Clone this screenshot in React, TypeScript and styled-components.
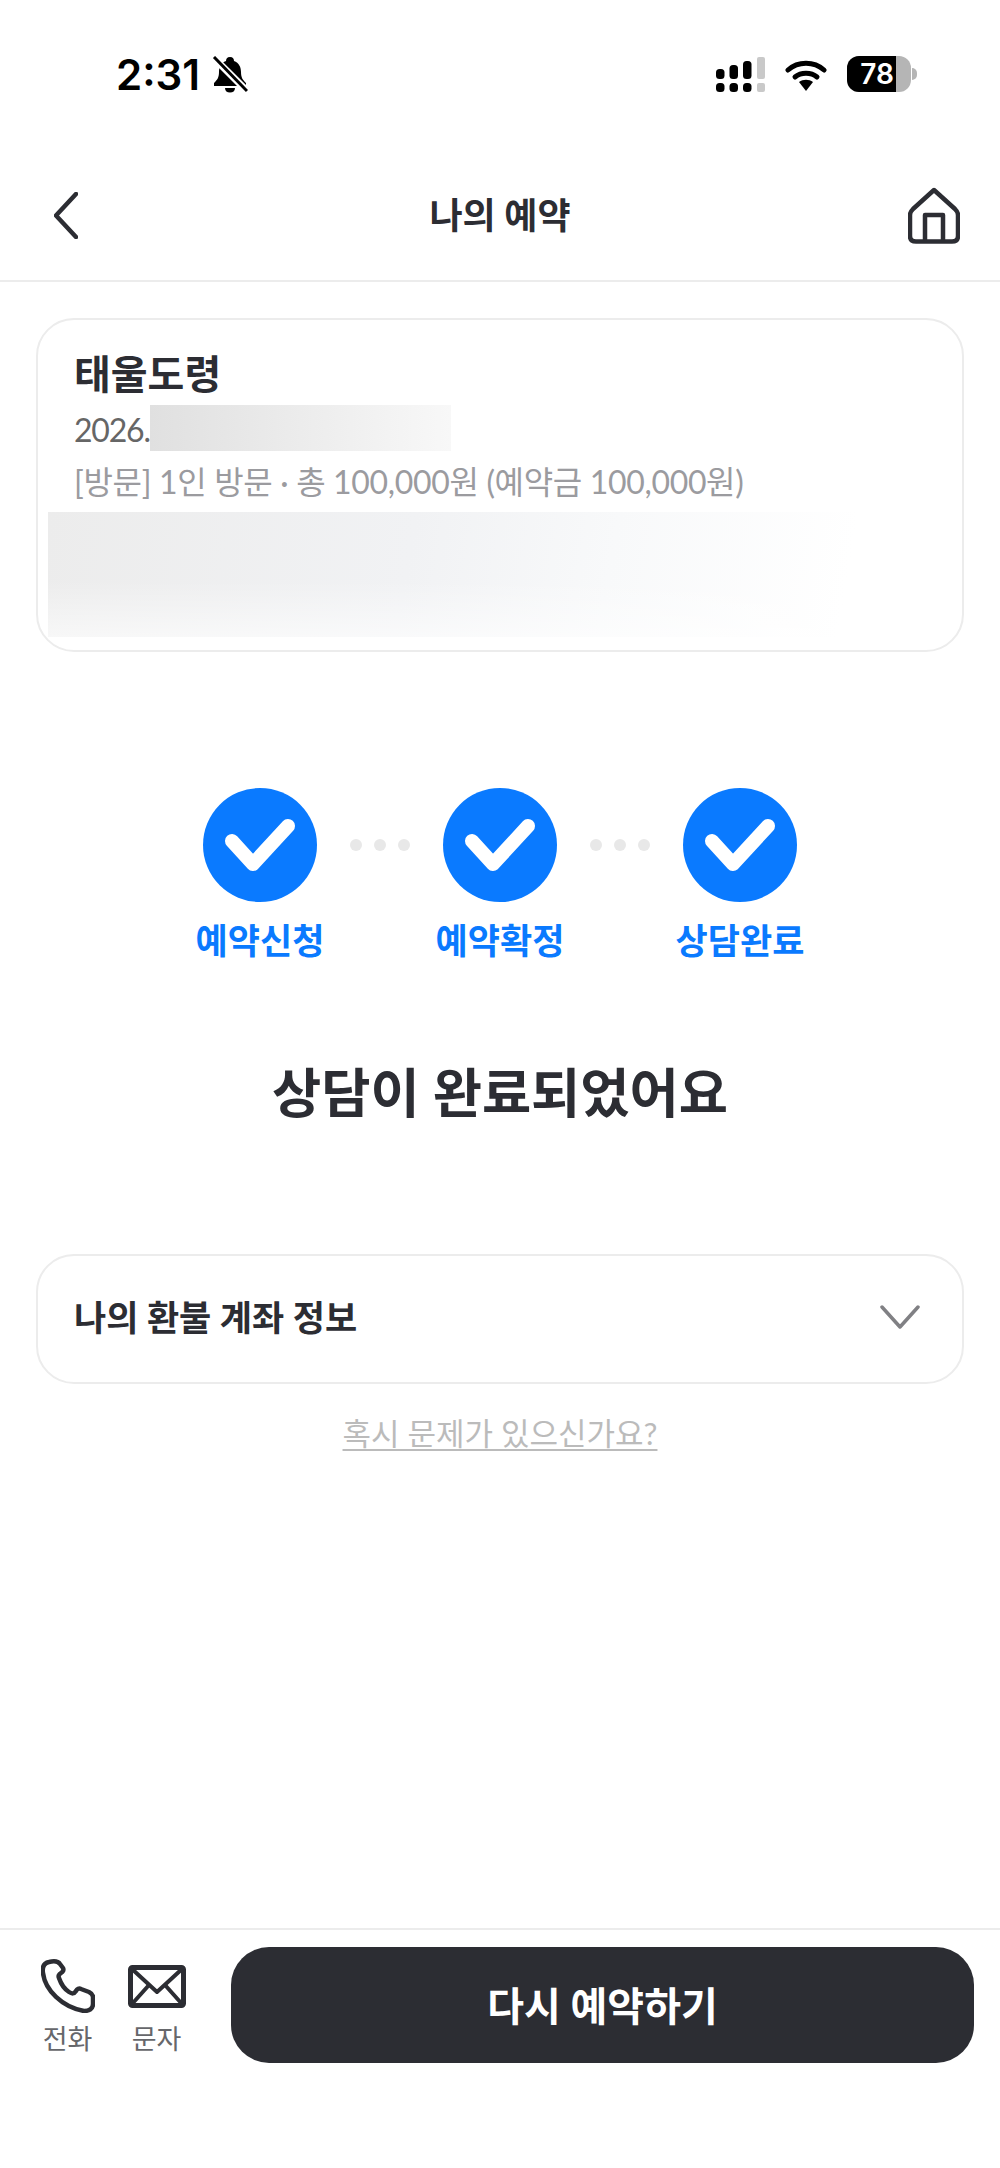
import React from 'react';
import styled, { createGlobalStyle } from 'styled-components';

const INK = '#2c2d33';
const BLUE = '#0a7aff';
const LINE = '#ececec';

const GlobalStyle = createGlobalStyle`
  html, body {
    margin: 0;
    padding: 0;
    background: #fff;
  }
  * {
    box-sizing: border-box;
  }
  body {
    font-family: Lato, "Noto Sans CJK KR", sans-serif;
    color: ${INK};
  }
`;

const Page = styled.div`
  width: 1000px;
  height: 2168px;
  display: flex;
  flex-direction: column;
  background: #fff;
  overflow: hidden;
`;

const StatusBar = styled.div`
  height: 150px;
  padding: 56px 83px 0 116px;
  display: flex;
  align-items: flex-start;
  justify-content: space-between;
`;

const StatusGroup = styled.div`
  display: flex;
  align-items: center;
`;

const Clock = styled.span`
  font-family: Inter, sans-serif;
  font-size: 42px;
  font-weight: 600;
  line-height: 36px;
  color: #000;
  width: 96px;
`;

const Battery = styled.div`
  position: relative;
  width: 64px;
  height: 36px;
  margin-left: 20px;
  border-radius: 12px;
  overflow: hidden;
  background: #b5b5b5;
  display: flex;
`;

const BatteryFill = styled.div`
  width: 49px;
  background: #000;
  color: #fff;
  font-family: Inter, sans-serif;
  font-size: 28px;
  font-weight: 600;
  line-height: 36px;
  text-align: right;
  padding-right: 2px;
`;

const BatteryTip = styled.div`
  width: 5px;
  height: 12px;
  border-radius: 0 6px 6px 0;
  background: #b5b5b5;
  margin-left: 1px;
`;

const Header = styled.header`
  height: 132px;
  padding: 0 40px;
  border-bottom: 2px solid ${LINE};
  display: grid;
  grid-template-columns: 1fr auto 1fr;
  align-items: center;
`;

const HomeLink = styled.div`
  justify-self: end;
  display: flex;
`;

const BackLink = styled.div`
  justify-self: start;
  margin-left: 14px;
  display: flex;
`;

const HeaderTitle = styled.h1`
  margin: 0;
  font-size: 36px;
  font-weight: 700;
  line-height: 44px;
  color: ${INK};
`;

const Main = styled.main`
  flex: 1;
  padding: 36px 36px 0;
  display: flex;
  flex-direction: column;
`;

const Card = styled.section`
  height: 334px;
  padding: 30px 36px 0;
  border: 2px solid ${LINE};
  border-radius: 38px;
  overflow: hidden;
`;

const ShopName = styled.div`
  font-size: 40px;
  font-weight: 700;
  line-height: 48px;
  color: ${INK};
`;

const DateRow = styled.div`
  display: flex;
  height: 46px;
  margin-top: 7px;
  font-size: 32px;
  line-height: 50px;
  letter-spacing: -1.2px;
  color: #666;
`;

const Redacted = styled.div`
  width: 301px;
  height: 46px;
  background: linear-gradient(90deg, #e0e0e0, #f8f8f8);
`;

const Detail = styled.div`
  margin-top: 8px;
  font-size: 32px;
  font-weight: 400;
  line-height: 46px;
  color: #9b9b9f;
  letter-spacing: -0.33px;
  white-space: nowrap;
`;

const BlurBlock = styled.div`
  width: 900px;
  height: 125px;
  margin: 7px 0 0 -26px;
  background:
    linear-gradient(180deg, rgba(255, 255, 255, 0) 55%, rgba(255, 255, 255, 0.6) 100%),
    linear-gradient(100deg, #ececec 0%, #f1f2f4 40%, #f8f9fa 62%, #fff 88%);
`;

const Stepper = styled.div`
  margin-top: 136px;
  display: flex;
  justify-content: center;
`;

const Step = styled.div`
  width: 114px;
  display: flex;
  flex-direction: column;
  align-items: center;
`;

const StepCircle = styled.div`
  width: 114px;
  height: 114px;
  border-radius: 50%;
  background: ${BLUE};
  display: flex;
  align-items: center;
  justify-content: center;
`;

const StepLabel = styled.span`
  margin-top: 15px;
  font-size: 35px;
  font-weight: 700;
  line-height: 46px;
  color: ${BLUE};
  white-space: nowrap;
`;

const Connector = styled.div`
  width: 126px;
  height: 114px;
  display: flex;
  align-items: center;
  justify-content: center;
  gap: 12px;
`;

const Dot = styled.i`
  width: 12px;
  height: 12px;
  border-radius: 50%;
  background: #e8e8e8;
`;

const Headline = styled.h2`
  margin: 91px 0 0;
  font-size: 53.5px;
  font-weight: 700;
  line-height: 76px;
  text-align: center;
  color: ${INK};
`;

const RefundRow = styled.div`
  margin-top: 124px;
  height: 130px;
  padding: 0 42px 4px 36px;
  border: 2px solid ${LINE};
  border-radius: 38px;
  display: flex;
  align-items: center;
  justify-content: space-between;
`;

const RefundLabel = styled.span`
  font-size: 35px;
  font-weight: 700;
  line-height: 44px;
  color: ${INK};
`;

const HelpLink = styled.a`
  align-self: center;
  margin-top: 27px;
  font-size: 31px;
  line-height: 44px;
  color: #bbbbbb;
  text-decoration: underline;
  text-underline-offset: 4px;
  text-decoration-thickness: 2px;
`;

const BottomBar = styled.footer`
  height: 240px;
  padding: 17px 26px 0 41px;
  border-top: 2px solid ${LINE};
  display: flex;
  align-items: flex-start;
`;

const ContactGroup = styled.div`
  display: flex;
  gap: 34px;
  margin-right: 46px;
  padding-top: 11px;
`;

const Contact = styled.div<{ $width: number }>`
  width: ${p => p.$width}px;
  display: flex;
  flex-direction: column;
  align-items: center;
`;

const ContactIcon = styled.div`
  height: 56px;
  display: flex;
  align-items: center;
  justify-content: center;
`;

const ContactLabel = styled.span`
  margin-top: 8px;
  font-size: 27px;
  line-height: 34px;
  color: #66676b;
  white-space: nowrap;
`;

const ReserveButton = styled.button`
  flex: none;
  width: 743px;
  height: 116px;
  padding: 0 0 3px;
  border: 0;
  border-radius: 38px;
  background: ${INK};
  color: #fff;
  font-family: inherit;
  font-size: 40px;
  font-weight: 700;
`;

const Check = () => (
  <svg width="114" height="114" viewBox="0 0 114 114" fill="none">
    <path d="M29 53L50 76L85 38" stroke="#fff" strokeWidth="14" strokeLinecap="round" strokeLinejoin="round" />
  </svg>
);

const Dots = () => (
  <Connector>
    <Dot />
    <Dot />
    <Dot />
  </Connector>
);

export default function App() {
  return (
    <Page>
      <GlobalStyle />
      <StatusBar>
        <StatusGroup>
          <Clock>2:31</Clock>
          <svg width="36" height="37" viewBox="0 0 36 37" fill="none">
            <path d="M18 1C21 1 22 3 22 5C27 7 29 11 29 16C29 22 31 24 34 27V30H2V27C5 24 7 22 7 16C7 11 9 7 14 5C14 3 15 1 18 1Z" fill="#000" />
            <path d="M13 32H23C23 35 21 36.500 18 36.500C15 36.500 13 35 13 32Z" fill="#000" />
            <path d="M2 2L34 34" stroke="#fff" strokeWidth="7" />
            <path d="M2 1L35 35" stroke="#000" strokeWidth="3" />
          </svg>
        </StatusGroup>
        <StatusGroup>
          <svg width="49" height="35" viewBox="0 0 49 35" fill="#000">
            <rect x="0" y="12" width="8.500" height="10" rx="3.500" />
            <rect x="13.500" y="8" width="8.500" height="14" rx="3.500" />
            <rect x="27" y="4" width="8.500" height="18" rx="3.500" />
            <rect x="41" y="0" width="8" height="22" rx="2" fill="#c9c9c9" />
            <rect x="0" y="26" width="8.500" height="9" rx="3.500" />
            <rect x="13.500" y="26" width="8.500" height="9" rx="3.500" />
            <rect x="27" y="26" width="8.500" height="9" rx="3.500" />
            <rect x="41" y="26" width="8" height="9" rx="2" fill="#c9c9c9" />
          </svg>
          <svg width="42" height="33" viewBox="0 0 42 33" fill="none" style={{ marginLeft: 20 }}>
            <path d="M3 12C13 3 29 3 39 12" stroke="#000" strokeWidth="5" strokeLinecap="round" />
            <path d="M10 19C16 14 26 14 32 19" stroke="#000" strokeWidth="5" strokeLinecap="round" />
            <path d="M14 24C18 21 24 21 28 24L21 33Z" fill="#000" />
          </svg>
          <Battery>
            <BatteryFill>78</BatteryFill>
          </Battery>
          <BatteryTip />
        </StatusGroup>
      </StatusBar>

      <Header>
        <BackLink>
          <svg width="24" height="47" viewBox="0 0 24 47" fill="none">
            <path d="M22 2L2 23.500L22 45" stroke={INK} strokeWidth="4.500" strokeLinecap="round" strokeLinejoin="round" />
          </svg>
        </BackLink>
        <HeaderTitle>나의 예약</HeaderTitle>
        <HomeLink>
          <svg width="52" height="57" viewBox="0 0 52 57" fill="none">
            <path d="M26 3L47 22C49 24 50 25.500 50 28V49C50 52.500 48 54.500 44 54.500H8C4 54.500 2 52.500 2 49V28C2 25.500 3 24 5 22Z" stroke={INK} strokeWidth="4.500" strokeLinejoin="round" />
            <path d="M17 54V28H35V54" stroke={INK} strokeWidth="4.500" strokeLinejoin="round" />
          </svg>
        </HomeLink>
      </Header>

      <Main>
        <Card>
          <ShopName>태울도령</ShopName>
          <DateRow>
            2026.
            <Redacted />
          </DateRow>
          <Detail>[방문] 1인 방문 · 총 100,000원 (예약금 100,000원)</Detail>
          <BlurBlock />
        </Card>

        <Stepper>
          <Step>
            <StepCircle><Check /></StepCircle>
            <StepLabel>예약신청</StepLabel>
          </Step>
          <Dots />
          <Step>
            <StepCircle><Check /></StepCircle>
            <StepLabel>예약확정</StepLabel>
          </Step>
          <Dots />
          <Step>
            <StepCircle><Check /></StepCircle>
            <StepLabel>상담완료</StepLabel>
          </Step>
        </Stepper>

        <Headline>상담이 완료되었어요</Headline>

        <RefundRow>
          <RefundLabel>나의 환불 계좌 정보</RefundLabel>
          <svg width="40" height="24" viewBox="0 0 40 24" fill="none">
            <path d="M2 2L20 22L38 2" stroke="#808084" strokeWidth="3.500" strokeLinecap="round" strokeLinejoin="round" />
          </svg>
        </RefundRow>

        <HelpLink>혹시 문제가 있으신가요?</HelpLink>
      </Main>

      <BottomBar>
        <ContactGroup>
          <Contact $width={53}>
            <ContactIcon>
              <svg width="54" height="54" viewBox="0 0 54 54" fill="none">
                <path d="M8 3C3 4 1 8 2 14C4 31 21 48 43 52C48 52 52 50 52 45V38C52 35 50 34 48 33L40 30C38 29 36 30 35 32C33 35 31 35 28 33C22 29 20 25 18 19C17 17 18 15 20 14C22 13 23 11 22 9L19 5C17 2 12 2 8 3Z" stroke={INK} strokeWidth="4.500" strokeLinejoin="round" />
              </svg>
            </ContactIcon>
            <ContactLabel>전화</ContactLabel>
          </Contact>
          <Contact $width={57}>
            <ContactIcon>
              <svg width="58" height="43" viewBox="0 0 58 43" fill="none">
                <rect x="2.500" y="2.500" width="53" height="38" rx="2" stroke={INK} strokeWidth="5" />
                <path d="M4 4L29 27L54 4" stroke={INK} strokeWidth="4" strokeLinejoin="round" />
                <path d="M4 39L21 20M54 39L37 20" stroke={INK} strokeWidth="4" />
              </svg>
            </ContactIcon>
            <ContactLabel>문자</ContactLabel>
          </Contact>
        </ContactGroup>
        <ReserveButton>다시 예약하기</ReserveButton>
      </BottomBar>
    </Page>
  );
}
